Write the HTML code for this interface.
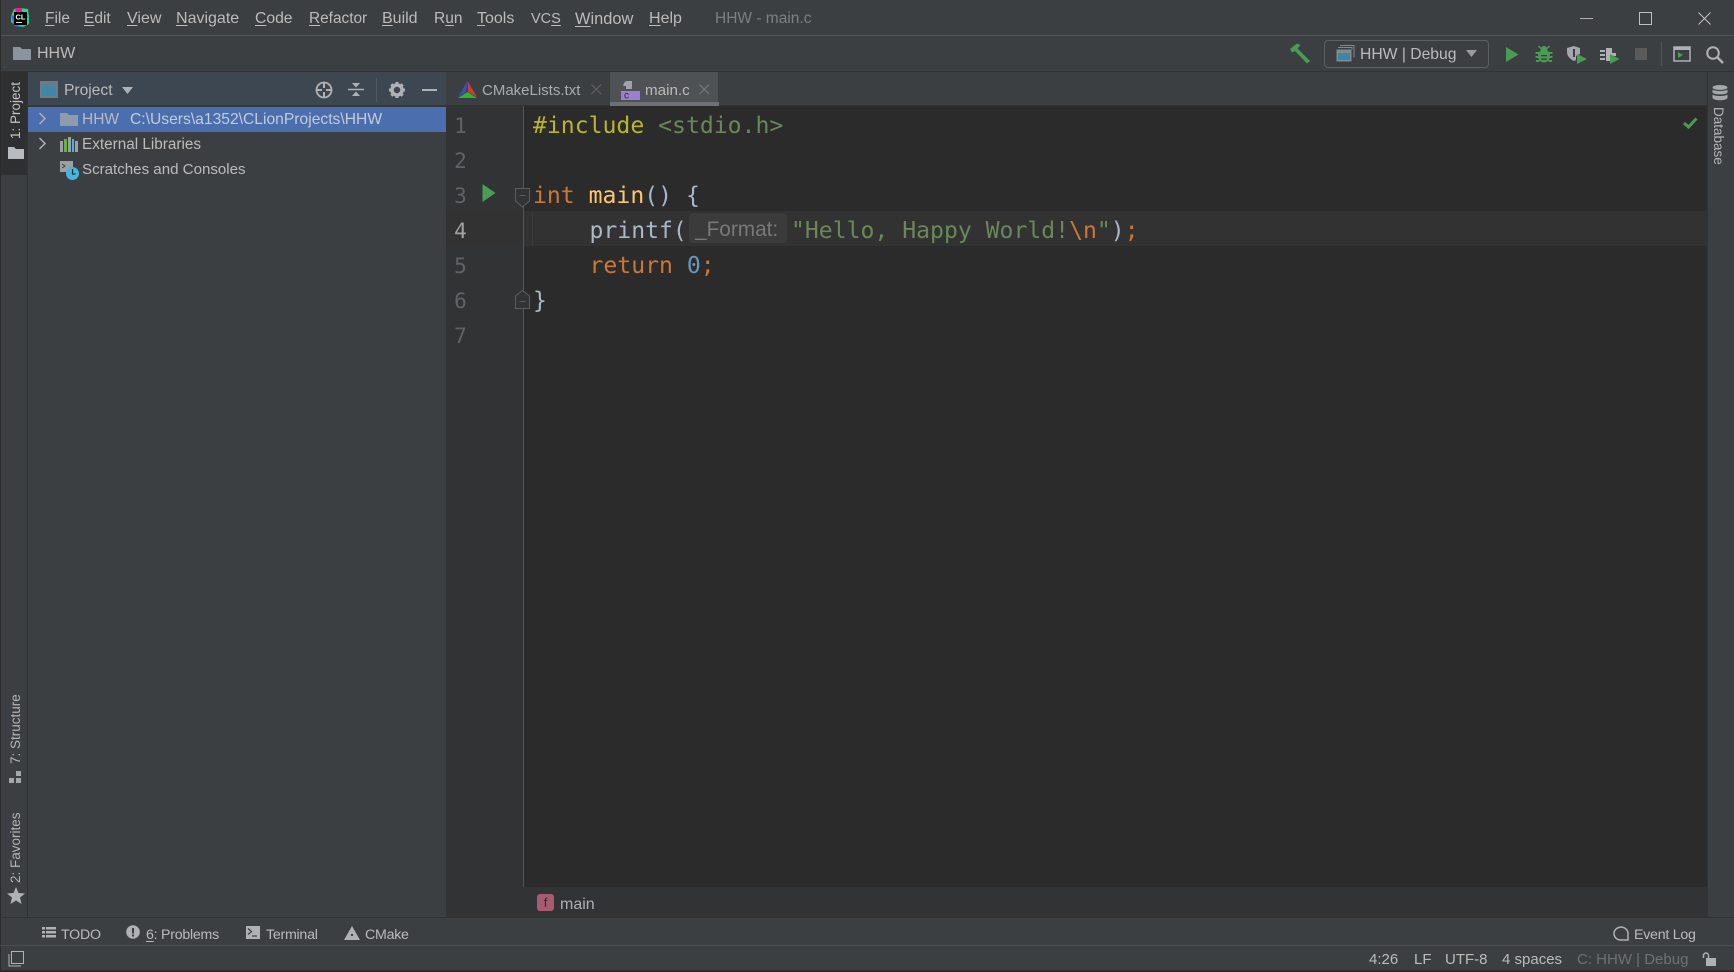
<!DOCTYPE html>
<html><head><meta charset="utf-8"><title>HHW - main.c</title>
<style>
html,body{margin:0;padding:0;background:#3c3f41;}
#r{position:relative;width:1734px;height:972px;overflow:hidden;background:#3c3f41;font-family:"Liberation Sans",sans-serif;font-size:16px;color:#bbbbbb;}
.a{position:absolute;}
.t{position:absolute;white-space:pre;line-height:20px;height:20px;}
.b{font-size:14.2px;letter-spacing:-.25px;top:925px;}
.s{font-size:15px;top:950px;}
.c{position:absolute;left:533px;white-space:pre;line-height:35px;height:35px;font-family:"DejaVu Sans Mono","Liberation Mono",monospace;font-size:23.1px;color:#a9b7c6;}
.n{position:absolute;left:447.500px;width:26px;text-align:center;line-height:35px;height:35px;font-family:"DejaVu Sans Mono",monospace;font-size:21px;color:#606366;}
.v{position:absolute;white-space:pre;line-height:20px;height:20px;font-size:13.500px;transform-origin:0 0;}
svg{position:absolute;overflow:visible;}
u{text-decoration-thickness:1px;text-underline-offset:2px;}
</style></head><body><div id="r">

<!-- structural regions -->
<div class="a" style="left:0;top:35px;width:1734px;height:1px;background:#515658"></div>
<div class="a" style="left:0;top:71px;width:1734px;height:1px;background:#323232"></div>
<div class="a" style="left:0;top:0;width:1px;height:972px;background:#2b2b2b"></div>

<!-- left strip -->
<div class="a" style="left:1px;top:72px;width:26px;height:103px;background:#2d2f30"></div>
<div class="a" style="left:27px;top:72px;width:1px;height:845px;background:#323232"></div>

<!-- project panel -->
<div class="a" style="left:28px;top:72px;width:418px;height:33px;background:#3d4752"></div>
<div class="a" style="left:28px;top:105px;width:418px;height:2px;background:#343638"></div>
<div class="a" style="left:28px;top:107px;width:418px;height:25px;background:#4b6eaf"></div>

<!-- tab bar -->
<div class="a" style="left:446px;top:72px;width:1261px;height:33px;background:#3c3f41"></div>
<div class="a" style="left:446px;top:105px;width:1261px;height:1px;background:#323232"></div>
<div class="a" style="left:610px;top:72px;width:108px;height:31px;background:#4e5254"></div>
<div class="a" style="left:610px;top:102px;width:109px;height:4px;background:#6d7074"></div>

<!-- editor -->
<div class="a" style="left:446px;top:106px;width:1261px;height:781px;background:#2b2b2b"></div>
<div class="a" style="left:446px;top:106px;width:77px;height:781px;background:#313335"></div>
<div class="a" style="left:523px;top:106px;width:1px;height:781px;background:#555555"></div>
<div class="a" style="left:446px;top:211px;width:77px;height:35px;background:#323232"></div>
<div class="a" style="left:524px;top:211px;width:1183px;height:35px;background:#323232"></div>
<div class="a" style="left:532px;top:211px;width:1px;height:35px;background:#3b3b3b"></div>
<div class="a" style="left:446px;top:887px;width:1261px;height:1px;background:#323232"></div>
<div class="a" style="left:446px;top:888px;width:1261px;height:29px;background:#313335"></div>
<div class="a" style="left:1707px;top:72px;width:1px;height:845px;background:#323232"></div>
<div class="a" style="left:0;top:917px;width:1734px;height:1px;background:#323232"></div>
<div class="a" style="left:0;top:945px;width:1734px;height:1px;background:#4b4e50"></div>
<div class="a" style="left:0;top:970px;width:1734px;height:2px;background:#2b2b2b"></div>

<!-- title bar -->
<svg style="left:10px;top:8px" width="20" height="20" viewBox="0 0 20 20">
<path d="M1 8 L4 1 L12 1 L14 4 L8 8 L6 18 L1 14Z" fill="#21d789"/>
<path d="M10 0 L18 1 L19 9 L14 8Z" fill="#21d789"/>
<path d="M1 7 L4 18 L10 19 L8 9Z" fill="#087cfa"/>
<path d="M5 0 L12 0 L12 4 L6 4Z" fill="#e91e8c"/>
<path d="M19 8 L19 16 L13 19 L8 18 L14 12Z" fill="#21d789"/>
<rect x="4" y="4" width="13" height="13" fill="#000"/>
<rect x="6" y="14" width="6" height="1" fill="#ddd"/>
<text x="5.500" y="11.500" font-family="Liberation Sans" font-size="7.500" font-weight="bold" fill="#fff">CL</text>
</svg>
<div class="t" style="left:45px;top:9px;font-size:15.500px"><u>F</u>ile</div>
<div class="t" style="left:84px;top:9px;font-size:15.500px"><u>E</u>dit</div>
<div class="t" style="left:127px;top:9px"><u>V</u>iew</div>
<div class="t" style="left:176px;top:9px"><u>N</u>avigate</div>
<div class="t" style="left:255px;top:9px;font-size:15.700px"><u>C</u>ode</div>
<div class="t" style="left:309px;top:9px;font-size:15.400px"><u>R</u>efactor</div>
<div class="t" style="left:382px;top:9px"><u>B</u>uild</div>
<div class="t" style="left:434px;top:9px;font-size:15.500px">R<u>u</u>n</div>
<div class="t" style="left:477px;top:9px"><u>T</u>ools</div>
<div class="t" style="left:531px;top:9px;font-size:14.500px">VC<u>S</u></div>
<div class="t" style="left:575px;top:9px;font-size:16.400px"><u>W</u>indow</div>
<div class="t" style="left:649px;top:9px"><u>H</u>elp</div>
<div class="t" style="left:715px;top:9px;font-size:15.500px;color:#7d8082">HHW - main.c</div>
<div class="a" style="left:1580px;top:18px;width:13px;height:1px;background:#b0b0b0"></div>
<div class="a" style="left:1639px;top:12px;width:11px;height:11px;border:1px solid #c0c0c0"></div>
<svg style="left:1698px;top:12px" width="13" height="13"><path d="M0.500 0.500L12.500 12.500M12.500 0.500L0.500 12.500" stroke="#c0c0c0" stroke-width="1"/></svg>

<!-- nav bar -->
<svg style="left:13px;top:46px" width="18" height="14"><path d="M0 1h7l2 2h9v11H0z" fill="#8a949e"/></svg>
<div class="t" style="left:37px;top:44px">HHW</div>
<svg style="left:1289px;top:43px" width="22" height="21"><path d="M1 6L8 0.500L11.500 2L8.500 5.500L21 18L18 20.500L6 8L3 9.500Z" fill="#499c54"/></svg>
<div class="a" style="left:1324px;top:40px;width:163px;height:26px;border:1px solid #5e6060;border-radius:4px"></div>
<svg style="left:1336px;top:45px" width="19" height="17"><path d="M4 0.500h14v12" fill="none" stroke="#7f8b91"/><path d="M2 2.500h14v2" fill="none" stroke="#7f8b91"/><rect x="0.500" y="4.500" width="15" height="12" fill="#7f8b91"/><rect x="2" y="8" width="12" height="7" fill="#3f87a8"/></svg>
<div class="t" style="left:1360px;top:45px;font-size:15.700px;color:#bbbbbb">HHW | Debug</div>
<svg style="left:1466px;top:50px" width="12" height="8"><path d="M0 0H11L5.500 7Z" fill="#9a9a9a"/></svg>
<svg style="left:1506px;top:47px" width="13" height="15"><path d="M0 0L12.500 7.500L0 15Z" fill="#499c54"/></svg>
<svg style="left:1535px;top:45px" width="18" height="18" viewBox="0 0 18 18"><g fill="#499c54"><ellipse cx="9" cy="11" rx="6" ry="6.500"/><circle cx="9" cy="4.500" r="3.500"/><path d="M4 0.500L6.800 3.300L5.800 4.300L3 1.500ZM14 0.500L11.200 3.300L12.200 4.300L15 1.500Z"/><rect x="0.500" y="7" width="3.500" height="2"/><rect x="14" y="7" width="3.500" height="2"/><rect x="0.500" y="11" width="3.500" height="2"/><rect x="14" y="11" width="3.500" height="2"/><rect x="1" y="15" width="3.500" height="2"/><rect x="13.500" y="15" width="3.500" height="2"/></g><rect x="6" y="10" width="6" height="1.300" fill="#3c3f41"/><rect x="6" y="13.500" width="6" height="1.300" fill="#3c3f41"/></svg>
<svg style="left:1567px;top:46px" width="20" height="18"><path d="M0 2L7 0L13 2V8L9 10V14L7 15C3 13 0 10 0 6Z" fill="#a4a8aa"/><path d="M7 3v8" stroke="#3c3f41" stroke-width="2"/><path d="M10 8L20 13L10 18Z" fill="#499c54"/></svg>
<svg style="left:1600px;top:47px" width="20" height="17"><g fill="#afb1b3"><rect x="0" y="3" width="5" height="2"/><rect x="0" y="7" width="5" height="2"/><rect x="0" y="11" width="5" height="2"/><path d="M6 1H12V6H16V9H12V14H6Z"/></g><path d="M10 7L19.500 12L10 17Z" fill="#499c54"/></svg>
<div class="a" style="left:1635px;top:48px;width:12px;height:12px;background:#5a5a5a"></div>
<div class="a" style="left:1661px;top:42px;width:1px;height:24px;background:#515658"></div>
<svg style="left:1673px;top:46px" width="18" height="16"><rect x="1" y="1" width="16" height="14" fill="none" stroke="#afb1b3" stroke-width="1.500"/><rect x="1" y="1" width="16" height="3" fill="#afb1b3"/><path d="M5 6L10 9L5 12Z" fill="#499c54"/></svg>
<svg style="left:1706px;top:46px" width="18" height="18"><circle cx="7" cy="7" r="5.800" fill="none" stroke="#afb1b3" stroke-width="2"/><path d="M11 11L17 17" stroke="#afb1b3" stroke-width="2.500"/></svg>

<!-- left strip labels -->
<div class="v" style="left:6px;top:139px;transform:rotate(-90deg);color:#c4c4c4">1: Project</div>
<svg style="left:8px;top:147px" width="16" height="12"><path d="M0 0h6l2 2h8v10H0z" fill="#b8bcbe"/></svg>
<div class="v" style="left:6px;top:764px;transform:rotate(-90deg);color:#b4b4b4">7: Structure</div>
<svg style="left:9px;top:771px" width="13" height="13" fill="#a4a8aa"><rect x="7" y="0" width="5" height="5"/><rect x="0" y="7" width="5" height="5"/><rect x="7" y="7" width="5" height="5"/></svg>
<div class="v" style="left:6px;top:883px;transform:rotate(-90deg);color:#b4b4b4">2: Favorites</div>
<svg style="left:7px;top:887px" width="18" height="17"><path d="M9 0L11.500 6L18 6.500L13 10.500L14.500 17L9 13.500L3.500 17L5 10.500L0 6.500L6.500 6Z" fill="#afb1b3"/></svg>

<!-- project header -->
<svg style="left:40px;top:81px" width="18" height="17"><rect x="0" y="0" width="18" height="17" fill="#6e7a85"/><rect x="2" y="5" width="14" height="10" fill="#3f87a8"/></svg>
<div class="t" style="left:64px;top:81px;font-size:15.600px">Project</div>
<svg style="left:122px;top:87px" width="11" height="7"><path d="M0 0H11L5.500 7Z" fill="#afb1b3"/></svg>
<svg style="left:315px;top:81px" width="18" height="18"><circle cx="9" cy="9" r="7.500" fill="none" stroke="#afb1b3" stroke-width="1.800"/><path d="M9 1v6M9 11v6M1 9h6M11 9h6" stroke="#afb1b3" stroke-width="2"/></svg>
<svg style="left:348px;top:81px" width="16" height="18"><path d="M0 8.500H16" stroke="#afb1b3" stroke-width="1.500"/><path d="M4 2H12L8 6.500Z" fill="#afb1b3"/><path d="M4 15H12L8 10.500Z" fill="#afb1b3"/></svg>
<div class="a" style="left:376px;top:78px;width:1px;height:24px;background:#515a63"></div>
<svg style="left:389px;top:82px" width="16" height="16" viewBox="0 0 16 16"><circle cx="8" cy="8" r="5" fill="none" stroke="#afb1b3" stroke-width="3.500"/><g stroke="#afb1b3" stroke-width="3"><path d="M8 0v3M8 13v3M0 8h3M13 8h3M2.300 2.300l2 2M11.700 11.700l2 2M13.700 2.300l-2 2M4.300 11.700l-2 2"/></g></svg>
<div class="a" style="left:422px;top:89px;width:15px;height:2px;background:#afb1b3"></div>

<!-- tree -->
<svg style="left:38px;top:112px" width="9" height="13"><path d="M1.500 1L7 6.500L1.500 12" fill="none" stroke="#afb1b3" stroke-width="1.500"/></svg>
<svg style="left:60px;top:112px" width="18" height="14"><path d="M0 1h7l2 2h9v11H0z" fill="#8f9ba8"/></svg>
<div class="t" style="left:82px;top:110px;font-size:15.500px;color:#bbbbbb">HHW</div>
<div class="t" style="left:130px;top:110px;font-size:15.650px;color:#c4cbd8">C:\Users\a1352\CLionProjects\HHW</div>
<svg style="left:38px;top:137px" width="9" height="13"><path d="M1.500 1L7 6.500L1.500 12" fill="none" stroke="#afb1b3" stroke-width="1.500"/></svg>
<svg style="left:60px;top:137px" width="18" height="15"><rect x="0" y="4" width="3" height="11" fill="#9aa0a4"/><rect x="4" y="2" width="3" height="13" fill="#62b543"/><rect x="8" y="0" width="3" height="15" fill="#9aa0a4"/><rect x="12" y="2" width="2" height="13" fill="#40b6e0"/><rect x="15" y="4" width="3" height="11" fill="#9aa0a4"/></svg>
<div class="t" style="left:82px;top:135px;font-size:15.300px">External Libraries</div>
<svg style="left:60px;top:161px" width="20" height="19"><rect x="0" y="0" width="13" height="11" fill="#9aa0a4"/><path d="M2 3L5 5L2 7" fill="none" stroke="#3c3f41"/><circle cx="12.500" cy="12.500" r="6.500" fill="#40b6e0"/><path d="M12.500 8v5h3" fill="none" stroke="#2b2b2b" stroke-width="1.200"/></svg>
<div class="t" style="left:82px;top:160px;font-size:15.100px">Scratches and Consoles</div>

<!-- tabs -->
<svg style="left:458px;top:81px" width="19" height="18"><path d="M9.500 0L0 16L8 11Z" fill="#3a4fc0"/><path d="M9.500 0L19 16L10 11Z" fill="#c0403c"/><path d="M0 17H19L9.500 11Z" fill="#2fb52f"/></svg>
<div class="t" style="left:482px;top:81px;font-size:15px;color:#a9acae">CMakeLists.txt</div>
<svg style="left:591px;top:84px" width="11" height="11"><path d="M0.500 0.500L10 10M10 0.500L0.500 10" stroke="#636567" stroke-width="1"/></svg>
<svg style="left:621px;top:81px" width="20" height="20"><path d="M5 0H11V8H5ZM3 2L5 0V5H2Z" fill="#9ea2a6"/><rect x="0" y="10" width="19" height="9" fill="#9d7fd1"/><text x="3" y="17.500" font-family="Liberation Sans" font-size="10" fill="#2b2b2b">c</text></svg>
<div class="t" style="left:645px;top:81px;font-size:15.200px;color:#bbbbbb">main.c</div>
<svg style="left:699px;top:84px" width="11" height="11"><path d="M0.500 0.500L10 10M10 0.500L0.500 10" stroke="#7a7d80" stroke-width="1"/></svg>

<!-- line numbers -->
<div class="n" style="top:109px">1</div>
<div class="n" style="top:144px">2</div>
<div class="n" style="top:179px">3</div>
<div class="n" style="top:214px;color:#a4a3a3">4</div>
<div class="n" style="top:249px">5</div>
<div class="n" style="top:284px">6</div>
<div class="n" style="top:319px">7</div>

<!-- gutter marks -->
<svg style="left:482px;top:184px" width="14" height="18"><path d="M0.500 0L13.500 9L0.500 18Z" fill="#499c54"/></svg>
<svg style="left:515px;top:188px" width="16" height="20"><path d="M0.500 0.500H14.500V13L7.500 19L0.500 13Z" fill="#313335" stroke="#5a5d5f"/><path d="M4.500 7.500H10.500" stroke="#5a5d5f"/></svg>
<svg style="left:515px;top:290px" width="16" height="20"><path d="M0.500 18.500H14.500V6L7.500 0.500L0.500 6Z" fill="#313335" stroke="#5a5d5f"/><path d="M4.500 11.500H10.500" stroke="#5a5d5f"/></svg>

<!-- code -->
<div class="c" style="top:109px"><span style="color:#bbb529">#include</span> <span style="color:#6a8759">&lt;stdio.h&gt;</span></div>
<div class="c" style="top:179px"><span style="color:#cc7832">int</span> <span style="color:#ffc66d">main</span>() {</div>
<div class="c" style="top:214px;left:589.500px">printf(</div>
<div class="a" style="left:689px;top:213px;width:98px;height:30px;background:#3b3b3b;border-radius:4px"></div>
<div class="t" style="left:695px;top:219px;font-size:20.800px;line-height:22px;height:22px;color:#787878">_Format:</div>
<div class="c" style="top:214px;left:791px"><span style="color:#6a8759">"Hello, Happy World!</span><span style="color:#cc7832">\n</span><span style="color:#6a8759">"</span>)<span style="color:#cc7832">;</span></div>
<div class="c" style="top:249px;left:589.500px"><span style="color:#cc7832">return</span> <span style="color:#6897bb">0</span><span style="color:#cc7832">;</span></div>
<div class="c" style="top:284px">}</div>

<!-- check -->
<svg style="left:1683px;top:117px" width="15" height="12"><path d="M1 6L5.500 10L13.500 1.500" fill="none" stroke="#499c54" stroke-width="3"/></svg>

<!-- right strip -->
<svg style="left:1712px;top:85px" width="16" height="16" fill="#a4a8aa"><ellipse cx="8" cy="2.500" rx="7.500" ry="2.500"/><path d="M0.500 4.500C2 6.500 14 6.500 15.500 4.500V7.500C14 10 2 10 0.500 7.500Z"/><path d="M0.500 9.500C2 11.500 14 11.500 15.500 9.500V13C14 16 2 16 0.500 13Z"/></svg>
<div class="v" style="left:1728px;top:107px;transform:rotate(90deg);color:#b4b4b4">Database</div>

<!-- breadcrumb -->
<div class="a" style="left:537px;top:894px;width:17px;height:17px;background:#a85a70;border-radius:3px;color:#3a2a30;font-size:13px;line-height:17px;text-align:center">f</div>
<div class="t" style="left:560px;top:895px;color:#a9b0b5">main</div>

<!-- tool window bar -->
<svg style="left:42px;top:926px" width="14" height="13" fill="#afb1b3"><rect x="0" y="1" width="3" height="2.500"/><rect x="4" y="1" width="10" height="2.500"/><rect x="0" y="5" width="3" height="2.500"/><rect x="4" y="5" width="10" height="2.500"/><rect x="0" y="9" width="3" height="2.500"/><rect x="4" y="9" width="10" height="2.500"/></svg>
<div class="t b" style="left:61px">TODO</div>
<svg style="left:126px;top:925px" width="14" height="14"><circle cx="7" cy="7" r="6.800" fill="#afb1b3"/><rect x="6" y="3" width="2" height="5.500" fill="#3c3f41"/><rect x="6" y="9.500" width="2" height="2" fill="#3c3f41"/></svg>
<div class="t b" style="left:146px"><u>6</u>: Problems</div>
<svg style="left:246px;top:926px" width="14" height="13"><rect width="14" height="13" fill="#afb1b3"/><path d="M2 2.500L5.500 5.500L2 8.500" fill="none" stroke="#3c3f41" stroke-width="1.200"/><path d="M6 10H11" stroke="#3c3f41" stroke-width="1.200"/></svg>
<div class="t b" style="left:266px">Terminal</div>
<svg style="left:344px;top:926px" width="16" height="14"><path d="M8 0L16 14H0Z" fill="#afb1b3"/><rect x="7" y="8" width="2" height="2" fill="#3c3f41"/></svg>
<div class="t b" style="left:365px">CMake</div>
<svg style="left:1612px;top:926px" width="17" height="15"><path d="M16 14H8A7 6.500 0 1 1 16 7.500Z" fill="none" stroke="#afb1b3" stroke-width="1.500"/></svg>
<div class="t b" style="left:1634px">Event Log</div>

<!-- status bar -->
<svg style="left:8px;top:951px" width="16" height="16"><rect x="3.500" y="0.500" width="12" height="12" fill="none" stroke="#afb1b3"/><path d="M1 3V15H13" fill="none" stroke="#afb1b3"/></svg>
<div class="t s" style="left:1369px">4:26</div>
<div class="t s" style="left:1414px">LF</div>
<div class="t s" style="left:1445px">UTF-8</div>
<div class="t s" style="left:1502px">4 spaces</div>
<div class="t s" style="left:1577px;color:#6f7173">C: HHW | Debug</div>
<svg style="left:1702px;top:952px" width="15" height="14"><path d="M1.500 6V3.500A2.500 2.500 0 0 1 6.500 3.500V6" fill="none" stroke="#afb1b3" stroke-width="1.500"/><rect x="4" y="6" width="10" height="8" fill="#afb1b3"/></svg>
</div></body></html>
